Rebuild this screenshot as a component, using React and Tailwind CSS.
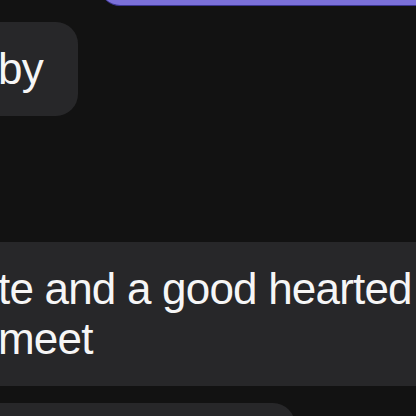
import React from 'react';

const Bubble = ({ children, className = '' }) => (
  <div className={`bg-[#272729] text-[#f6f6f6] rounded-[22px] ${className}`}>{children}</div>
);

const App = () => {
  return (
    <div
      className="w-[416px] h-[416px] overflow-hidden bg-[#121212] flex flex-col"
      style={{ fontFamily: '"Liberation Sans", Arial, sans-serif' }}
    >
      {/* outgoing message, only its bottom edge shows */}
      <div className="flex justify-end shrink-0">
        <div className="w-[340px] h-[40px] mt-[-34px] mr-[-24px] rounded-[20px] bg-[#7b70d9] border-b border-[#3b3592]" />
      </div>

      {/* incoming: "...by" */}
      <div className="flex justify-end w-[78px] mt-4 shrink-0">
        <Bubble className="shrink-0 whitespace-nowrap pl-5 pr-[35px] py-[22px] text-[44px] leading-[50px] tracking-[-0.8px]">
          referred by
        </Bubble>
      </div>

      {/* incoming: long text */}
      <div className="mt-[126px] shrink-0">
        <Bubble className="w-[480px] ml-[-40px] pl-[38px] py-[22px] text-[44px] leading-[50px] tracking-[-0.8px]">
          <div className="whitespace-nowrap">te and a good hearted</div>
          <div className="whitespace-nowrap">meet</div>
        </Bubble>
      </div>

      {/* next incoming bubble, cut at the bottom */}
      <div className="mt-[17px] shrink-0">
        <Bubble className="w-[335px] ml-[-40px] h-[120px]" />
      </div>
    </div>
  );
};

export default App;
